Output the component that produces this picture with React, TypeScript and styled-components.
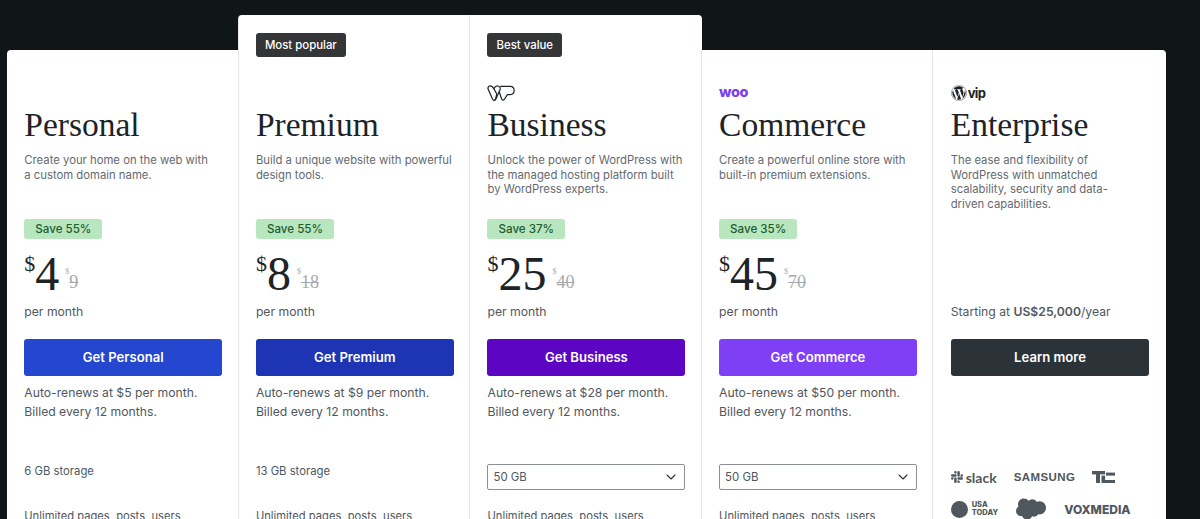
import { ChevronDown } from "lucide-react";
import { FaWordpress } from "react-icons/fa";
import { SiSalesforce, SiSlack } from "react-icons/si";
import { createGlobalStyle, styled } from "styled-components";

type Plan = {
  name: string;
  description: string;
  badge?: string;
  logo?: "wp" | "woo" | "vip";
  save?: string;
  price?: string;
  oldPrice?: string;
  renew?: number;
  cta: string;
  color: string;
  storage?: string;
  select?: boolean;
};

const PLANS: Plan[] = [
  {
    name: "Personal",
    description: "Create your home on the web with\na custom domain name.",
    save: "Save 55%",
    price: "4",
    oldPrice: "9",
    renew: 5,
    cta: "Get Personal",
    color: "#2546cf",
    storage: "6 GB storage",
  },
  {
    name: "Premium",
    description: "Build a unique website with powerful\ndesign tools.",
    badge: "Most popular",
    save: "Save 55%",
    price: "8",
    oldPrice: "18",
    renew: 9,
    cta: "Get Premium",
    color: "#1d35b4",
    storage: "13 GB storage",
  },
  {
    name: "Business",
    description:
      "Unlock the power of WordPress with\nthe managed hosting platform built\nby WordPress experts.",
    badge: "Best value",
    logo: "wp",
    save: "Save 37%",
    price: "25",
    oldPrice: "40",
    renew: 28,
    cta: "Get Business",
    color: "#5c06c4",
    select: true,
  },
  {
    name: "Commerce",
    description: "Create a powerful online store with\nbuilt-in premium extensions.",
    logo: "woo",
    save: "Save 35%",
    price: "45",
    oldPrice: "70",
    renew: 50,
    cta: "Get Commerce",
    color: "#7f3ff5",
    select: true,
  },
  {
    name: "Enterprise",
    description:
      "The ease and flexibility of\nWordPress with unmatched\nscalability, security and data-\ndriven capabilities.",
    logo: "vip",
    cta: "Learn more",
    color: "#2c3338",
  },
];

function WpCloudLogo() {
  return (
    <svg width="29" height="17" viewBox="0 0 29 17" fill="none">
      <g stroke="#1d2327" strokeWidth="1.2" strokeLinejoin="round">
        <path d="M1.3 4.6C.2 2.2 2 .7 3.6.8 5 .9 6 2.2 6.8 3.6L9.8 9 8.6 13.8C8 15.8 6.6 15.8 5.6 14.2Z" />
        <path d="M6.8 3.6C8 1.6 9.6.6 11.2 1 13 1.4 13.6 3.2 13 4.8L9.2 13.4C8.6 15 7.4 15.6 6.4 15.2" />
        <path d="M13.2 1.4H23.4C28.4 1.6 28.4 9.4 23.2 9.6H20.4L17.6 14C16.8 15.6 15.2 15.4 14.6 13.8L12.2 6.8" />
      </g>
    </svg>
  );
}

function PlanLogo({ kind }: { kind?: Plan["logo"] }) {
  if (kind === "wp") return <WpCloudLogo />;
  if (kind === "woo") return <WooMark>woo</WooMark>;
  if (kind === "vip") {
    return (
      <VipMark>
        <FaWordpress size={16} />
        vip
      </VipMark>
    );
  }
  return null;
}

function TrustedLogos() {
  return (
    <LogoGrid>
      <LogoRow $gap={17}>
        <SlackMark>
          <SiSlack size={12} />
          slack
        </SlackMark>
        <SamsungMark>SAMSUNG</SamsungMark>
        <svg width="23" height="12" viewBox="0 0 23 12" fill="#50575e">
          <rect x="0" y="0" width="13" height="3.4" />
          <rect x="4" y="0" width="4" height="12" />
          <rect x="9.5" y="4.6" width="3.6" height="7.4" />
          <rect x="14" y="1.6" width="9" height="3" />
          <rect x="13" y="9" width="10" height="3" />
        </svg>
      </LogoRow>
      <LogoRow $gap={18}>
        <UsaToday>
          <UsaDot />
          <UsaText>
            USA
            <br />
            TODAY
          </UsaText>
        </UsaToday>
        <SiSalesforce size={30} color="#50575e" />
        <VoxMark>VOXMEDIA</VoxMark>
      </LogoRow>
    </LogoGrid>
  );
}

function App() {
  return (
    <>
      <GlobalStyle />
      <S.Page>
        {PLANS.map((plan) => (
          <S.Column key={plan.name} $featured={!!plan.badge}>
            <S.BadgeSlot $featured={!!plan.badge}>
              {plan.badge && <S.Badge>{plan.badge}</S.Badge>}
            </S.BadgeSlot>
            <S.LogoSlot>
              <PlanLogo kind={plan.logo} />
            </S.LogoSlot>
            <S.Title>{plan.name}</S.Title>
            <S.Description>{plan.description}</S.Description>
            <S.PriceSlot>
              {plan.save && <S.Save>{plan.save}</S.Save>}
              {plan.price && (
                <S.Price>
                  <S.Currency>$</S.Currency>
                  <S.Amount>{plan.price}</S.Amount>
                  <S.OldCurrency>$</S.OldCurrency>
                  <S.OldAmount>{plan.oldPrice}</S.OldAmount>
                </S.Price>
              )}
            </S.PriceSlot>
            <S.Period>
              {plan.price ? (
                "per month"
              ) : (
                <>
                  Starting at <strong>US$25,000</strong>/year
                </>
              )}
            </S.Period>
            <S.Cta $color={plan.color}>{plan.cta}</S.Cta>
            <S.Renew>
              {plan.renew && (
                <>
                  Auto-renews at ${plan.renew} per month.
                  <br />
                  Billed every 12 months.
                </>
              )}
            </S.Renew>
            <S.StorageSlot>
              {plan.storage && <S.Storage>{plan.storage}</S.Storage>}
              {plan.select && (
                <S.Select>
                  50 GB
                  <ChevronDown size={16} strokeWidth={1.6} color="#2c3338" />
                </S.Select>
              )}
              {!plan.price && <TrustedLogos />}
            </S.StorageSlot>
            {plan.price && <S.Feature>Unlimited pages, posts, users,</S.Feature>}
          </S.Column>
        ))}
      </S.Page>
    </>
  );
}
export default App;

const GlobalStyle = createGlobalStyle`
  html, body {
    margin: 0;
    height: 519px;
    overflow: hidden;
    background: #101517;
    font-family: Inter, "Liberation Sans", sans-serif;
  }
`;

const Page = styled.div`
  display: grid;
  grid-template-columns: repeat(4, 231.6px) 1fr;
  width: 1159px;
  height: 519px;
  margin-left: 7px;
  padding-top: 15px;
  box-sizing: border-box;
  overflow: hidden;
`;

const Column = styled.section<{ $featured: boolean }>`
  margin-top: ${({ $featured }) => ($featured ? "0" : "35px")};
  padding: 0 16.6px 0 17.3px;
  background: #fff;
  box-sizing: border-box;
  min-width: 0;
  box-shadow: -1px 0 0 #e4e5e7;

  &:first-child {
    box-shadow: none;
    border-top-left-radius: 4px;
  }

  &:nth-child(2) {
    border-top-left-radius: 4px;
  }

  &:nth-child(3),
  &:last-child {
    border-top-right-radius: 4px;
  }
`;

const BadgeSlot = styled.div<{ $featured: boolean }>`
  height: ${({ $featured }) => ($featured ? "70px" : "35px")};
  padding-top: 18px;
  box-sizing: border-box;
`;

const Badge = styled.span`
  display: inline-block;
  height: 24px;
  padding: 0 9px;
  line-height: 25px;
  border-radius: 3px;
  background: #333537;
  color: #fff;
  font-size: 11.4px;
  font-weight: 500;
`;

const LogoSlot = styled.div`
  height: 20px;
  display: flex;
  align-items: flex-start;
`;

const WooMark = styled.span`
  color: #7b3ff2;
  font-size: 14.5px;
  line-height: 14px;
  font-weight: 800;
  letter-spacing: -0.5px;
`;

const VipMark = styled.span`
  display: inline-flex;
  align-items: center;
  gap: 1px;
  color: #1d2327;
  font-size: 13px;
  line-height: 16px;
  font-weight: 700;
  letter-spacing: -0.6px;
`;

const Title = styled.h2`
  margin: 0;
  height: 48px;
  color: #1d2327;
  font-family: "Liberation Serif", serif;
  font-size: 33.5px;
  line-height: 40px;
  font-weight: 400;
`;

const Description = styled.p`
  margin: 0;
  height: 64px;
  color: #646970;
  font-size: 11.3px;
  line-height: 14.5px;
  white-space: pre-line;
`;

const PriceSlot = styled.div`
  height: 82px;
`;

const Save = styled.span`
  display: inline-block;
  height: 20px;
  padding: 0 11px;
  line-height: 20px;
  border-radius: 3px;
  background: #b8e6bf;
  color: #1c5c2e;
  font-size: 11.6px;
  font-weight: 500;
`;

const Price = styled.div`
  display: flex;
  margin-top: 9px;
  height: 48px;
  font-family: "Liberation Serif", serif;
  color: #1d2327;
`;

const Currency = styled.span`
  font-size: 22px;
  line-height: 32px;
`;

const Amount = styled.span`
  font-size: 48px;
  line-height: 52px;
`;

const OldCurrency = styled.span`
  margin-left: 6px;
  color: #a7aaad;
  font-size: 8px;
  line-height: 48px;
`;

const OldAmount = styled.span`
  color: #a7aaad;
  font-size: 18px;
  line-height: 68px;
  text-decoration: line-through;
  text-decoration-thickness: 1px;
`;

const Period = styled.div`
  height: 40px;
  padding-top: 4px;
  box-sizing: border-box;
  color: #50575e;
  font-size: 12.2px;
  line-height: 18px;

  strong {
    font-weight: 600;
  }
`;

const Cta = styled.button<{ $color: string }>`
  display: block;
  width: 100%;
  height: 37px;
  padding: 0 0 2px;
  border: 0;
  border-radius: 3px;
  background: ${({ $color }) => $color};
  color: #fff;
  font-family: inherit;
  font-size: 13.1px;
  font-weight: 600;
`;

const Renew = styled.div`
  height: 88px;
  padding-top: 8px;
  box-sizing: border-box;
  color: #50575e;
  font-size: 12.2px;
  line-height: 18.5px;
`;

const StorageSlot = styled.div`
  height: 45px;
`;

const Storage = styled.div`
  color: #50575e;
  font-size: 11.3px;
  line-height: 14px;
`;

const Select = styled.div`
  display: flex;
  align-items: center;
  justify-content: space-between;
  height: 26px;
  padding: 0 5px;
  box-sizing: border-box;
  border: 1px solid #8c8f94;
  border-radius: 2px;
  color: #50575e;
  font-size: 11.4px;
`;

const Feature = styled.div`
  color: #50575e;
  font-size: 11.2px;
  line-height: 15px;
`;

const LogoGrid = styled.div`
  display: flex;
  flex-direction: column;
  gap: 10px;
  margin-top: 2px;
  color: #50575e;
`;

const LogoRow = styled.div<{ $gap: number }>`
  display: flex;
  align-items: center;
  gap: ${({ $gap }) => $gap}px;
  height: 22px;
`;

const SlackMark = styled.span`
  display: inline-flex;
  align-items: center;
  gap: 3px;
  font-family: Lato, sans-serif;
  font-size: 14px;
  font-weight: 700;
`;

const SamsungMark = styled.span`
  font-family: "Liberation Sans", sans-serif;
  font-size: 11.5px;
  font-weight: 700;
  letter-spacing: 0.4px;
`;

const UsaToday = styled.span`
  display: inline-flex;
  align-items: center;
  gap: 4px;
`;

const UsaDot = styled.span`
  width: 17px;
  height: 17px;
  border-radius: 50%;
  background: #50575e;
`;

const UsaText = styled.span`
  font-size: 7.5px;
  line-height: 8px;
  font-weight: 800;
`;

const VoxMark = styled.span`
  font-size: 12px;
  font-weight: 800;
`;

const S = {
  Page,
  Column,
  BadgeSlot,
  Badge,
  LogoSlot,
  Title,
  Description,
  PriceSlot,
  Save,
  Price,
  Currency,
  Amount,
  OldCurrency,
  OldAmount,
  Period,
  Cta,
  Renew,
  StorageSlot,
  Storage,
  Select,
  Feature,
};
